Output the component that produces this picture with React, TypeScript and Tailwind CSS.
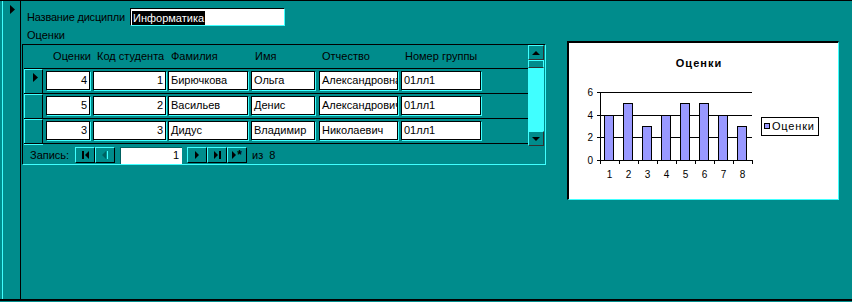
import React from "react";

const rows = [
  { mark: "4", code: "1", last: "Бирючкова", first: "Ольга", mid: "Александровна", group: "01лл1" },
  { mark: "5", code: "2", last: "Васильев", first: "Денис", mid: "Александрович", group: "01лл1" },
  { mark: "3", code: "3", last: "Дидус", first: "Владимир", mid: "Николаевич", group: "01лл1" },
];

const marks = [4, 5, 3, 4, 5, 5, 4, 3];

function Arrow({ dir = "right" }: { dir?: "right" | "left" | "up" | "down" }) {
  const pts = {
    right: "0,0 5,4.5 0,9",
    left: "5,0 0,4.5 5,9",
    up: "0,4 4,0 8,4",
    down: "0,0 8,0 4,4",
  }[dir];
  const size = dir === "up" || dir === "down" ? { w: 8, h: 4 } : { w: 5, h: 9 };
  return (
    <svg width={size.w} height={size.h} viewBox={`0 0 ${size.w} ${size.h}`}>
      <polygon points={pts} fill="#000" />
    </svg>
  );
}

function Cell({ w, ml, right, children }: { w: string; ml: string; right?: boolean; children: string }) {
  return (
    <div
      className={`${w} ${ml} h-[19px] bg-white border border-black shadow-[1px_1px_0_#40ffff] overflow-hidden whitespace-nowrap leading-[17px] ${
        right ? "text-right pr-[2px]" : "pl-[2px]"
      }`}>
      {children}
    </div>
  );
}

function NavBtn({ children }: { children: React.ReactNode }) {
  return (
    <div className="w-[20px] h-[16px] flex items-center justify-center gap-px border-t border-l border-[#40ffff] border-b border-r border-b-black border-r-black">
      {children}
    </div>
  );
}

function Chart() {
  const axisY = 117;
  const unit = 68 / 6;
  return (
    <svg width="268" height="155" className="block">
      <text x="130" y="24" textAnchor="middle" fontSize="11" fontWeight="bold" letterSpacing="1" fontFamily="Liberation Sans, Arial, sans-serif">
        Оценки
      </text>
      {[0, 2, 4, 6].map((v) => {
        const y = axisY - v * unit;
        return (
          <g key={v}>
            <line x1="28" x2="183" y1={Math.round(y) + 0.5} y2={Math.round(y) + 0.5} stroke="#000" shapeRendering="crispEdges" />
            <text x="24" y={Math.round(y) + 4} textAnchor="end" fontSize="10" fontFamily="Liberation Sans, Arial, sans-serif">
              {v}
            </text>
          </g>
        );
      })}
      <line x1="31.5" x2="31.5" y1="49" y2="118" stroke="#000" shapeRendering="crispEdges" />
      {marks.map((m, i) => {
        const x0 = 31 + 19 * i;
        const h = Math.round(m * unit);
        return (
          <g key={i}>
            <rect x={x0 + 4.5} y={axisY - h + 0.5} width="9" height={h} fill="#9999ff" stroke="#000" shapeRendering="crispEdges" />
            <line x1={x0 + 19.5} x2={x0 + 19.5} y1="117" y2="121" stroke="#000" shapeRendering="crispEdges" />
            <text x={x0 + 9.5} y="135" textAnchor="middle" fontSize="10" fontFamily="Liberation Sans, Arial, sans-serif">
              {i + 1}
            </text>
          </g>
        );
      })}
      <line x1="31.5" x2="31.5" y1="117" y2="121" stroke="#000" shapeRendering="crispEdges" />
      <rect x="192.5" y="74.5" width="57" height="18" fill="#fff" stroke="#000" shapeRendering="crispEdges" />
      <rect x="195.5" y="80.5" width="5" height="5" fill="#9999ff" stroke="#000" shapeRendering="crispEdges" />
      <text x="203" y="87" fontSize="11" letterSpacing="0.8" fontFamily="Liberation Sans, Arial, sans-serif">
        Оценки
      </text>
    </svg>
  );
}

export default function App() {
  return (
    <div className="w-[852px] h-[302px] bg-[#008c8c] pb-px font-['Liberation_Sans',Arial,sans-serif] text-[11px] text-black">
      <div className="h-full flex border-t border-b-2 border-black">
        {/* record selector strip */}
        <div className="w-[21px] pl-[2px] flex">
          <div className="flex-1 border-l border-[#40ffff] border-r border-r-black pt-[4px] pl-[7px]">
            <Arrow />
          </div>
        </div>

        <div className="flex-1 flex items-start pl-px pt-[7px]">
          <div className="flex flex-col">
            <div className="flex items-center h-[18px]">
              <div className="w-[108px] pl-[5px] whitespace-nowrap tracking-[-0.2px]">Название дисципли</div>
              <div className="w-[155px] h-[18px] bg-white border-t border-l border-black border-b border-r border-b-[#40ffff] border-r-[#40ffff] pl-px pt-px">
                <span className="bg-black text-white leading-[14px] inline-block px-px">Информатика</span>
              </div>
            </div>
            <div className="h-[18px] flex items-center pl-[5px]">Оценки</div>

            {/* subform */}
            <div className="w-[524px] h-[121px] border-t border-l border-black border-r border-b border-r-[#40ffff] border-b-[#40ffff] flex flex-col">
              <div className="flex h-[101px]">
                <div className="flex-1 flex flex-col pl-px">
                  <div className="h-[23px] flex items-center pl-[20px] whitespace-nowrap">
                    <div className="w-[44px] ml-[3px] text-right">Оценки</div>
                    <div className="w-[73px] ml-[3px] pl-[3px]">Код студента</div>
                    <div className="w-[80px] ml-[2px] pl-[2px]">Фамилия</div>
                    <div className="w-[64px] ml-[3px] pl-[3px]">Имя</div>
                    <div className="w-[79px] ml-[4px] pl-[2px]">Отчество</div>
                    <div className="w-[80px] ml-[3px] pl-[3px]">Номер группы</div>
                  </div>
                  {rows.map((r, i) => (
                    <div key={i} className="h-[25px] flex border-t border-black">
                      <div className="w-[19px] border-t border-l border-[#40ffff] border-r border-r-black pl-[8px] pt-[3px]">
                        {i === 0 && <Arrow />}
                      </div>
                      <div className="flex pt-[2px]">
                        <Cell w="w-[44px]" ml="ml-[3px]" right>{r.mark}</Cell>
                        <Cell w="w-[73px]" ml="ml-[3px]" right>{r.code}</Cell>
                        <Cell w="w-[80px]" ml="ml-[2px]">{r.last}</Cell>
                        <Cell w="w-[64px]" ml="ml-[3px]">{r.first}</Cell>
                        <Cell w="w-[79px]" ml="ml-[4px]">{r.mid}</Cell>
                        <Cell w="w-[80px]" ml="ml-[3px]">{r.group}</Cell>
                      </div>
                    </div>
                  ))}
                  <div className="flex-1 flex border-t border-black">
                    <div className="w-[19px] h-px bg-[#40ffff]" />
                  </div>
                </div>

                {/* scrollbar */}
                <div className="w-[16px] mr-px flex flex-col">
                  <div className="h-[15px] flex items-center justify-center border-t border-l border-[#40ffff] border-b border-r border-b-[#303030] border-r-[#303030]">
                    <Arrow dir="up" />
                  </div>
                  <div className="h-[8px] border border-[#40ffff] border-b-[#303030]" />
                  <div className="flex-1 bg-[#40ffff]" />
                  <div className="h-[15px] flex items-center justify-center border-t border-l border-[#40ffff] border-b border-r border-b-[#303030] border-r-[#303030]">
                    <Arrow dir="down" />
                  </div>
                </div>
              </div>

              {/* navigation */}
              <div className="h-[18px] flex items-center pl-[7px]">
                <div className="w-[45px]">Запись:</div>
                <NavBtn>
                  <div className="w-[2px] h-[8px] bg-black" />
                  <svg width="4" height="8"><polygon points="4,0 0,4 4,8" fill="#000" /></svg>
                </NavBtn>
                <NavBtn>
                  <svg width="4" height="8"><polygon points="4,0 0,4 4,8" fill="#006060" /></svg>
                  <div className="w-px h-[8px] bg-[#40ffff]" />
                </NavBtn>
                <div className="w-[62px] h-[17px] ml-[5px] bg-white border-t border-l border-[#006060] text-right pr-[3px] leading-[15px]">
                  1
                </div>
                <div className="ml-[5px] flex">
                  <NavBtn>
                    <svg width="4" height="8"><polygon points="0,0 4,4 0,8" fill="#000" /></svg>
                  </NavBtn>
                  <NavBtn>
                    <svg width="4" height="8"><polygon points="0,0 4,4 0,8" fill="#000" /></svg>
                    <div className="w-[2px] h-[8px] bg-black" />
                  </NavBtn>
                  <NavBtn>
                    <svg width="4" height="8"><polygon points="0,0 4,4 0,8" fill="#000" /></svg>
                    <span className="font-bold text-[12px] leading-[10px]">*</span>
                  </NavBtn>
                </div>
                <div className="ml-[5px]">из&nbsp;&nbsp;8</div>
              </div>
            </div>
          </div>

          {/* chart */}
          <div className="ml-[21px] mt-[33px] w-[272px] h-[159px] bg-white border-t-2 border-l-2 border-black border-b border-r border-b-[#40ffff] border-r-[#40ffff]">
            <Chart />
          </div>
        </div>
      </div>
    </div>
  );
}
